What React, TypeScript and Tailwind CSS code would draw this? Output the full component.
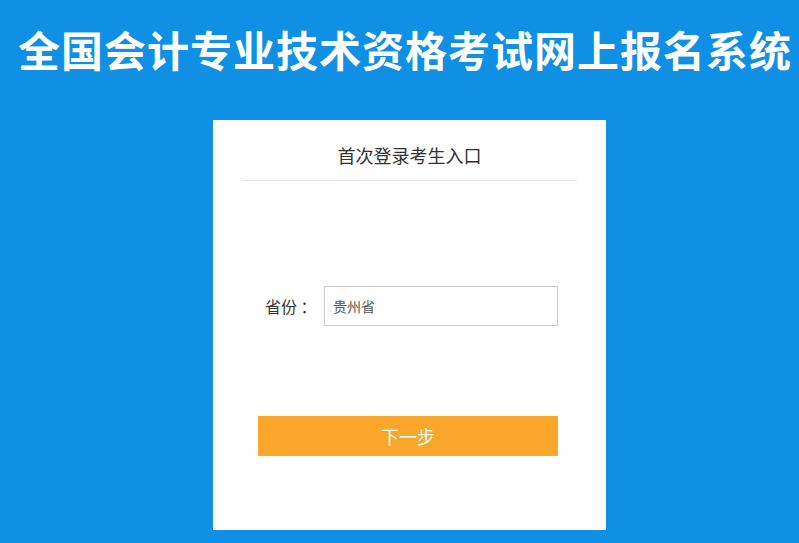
export default function App() {
  return (
    <div
      className="w-[799px] h-[543px] overflow-hidden bg-[#1090e4]"
      style={{ fontFamily: '"Noto Sans CJK SC", "Noto Sans", sans-serif' }}
    >
      <div className="pt-[24px] h-[74px] pl-[18px]">
        <h1 className="text-[42px] leading-[50px] font-bold text-white whitespace-nowrap tracking-[1px]">
          全国会计专业技术资格考试网上报名系统
        </h1>
      </div>
      <div className="mt-[46px] ml-[213px] w-[393px] h-[410px] bg-white">
        <div className="mx-[29px] h-[61px] border-b border-[#e5e5e5] pt-[23px] text-center">
          <div className="text-[18px] leading-[24px] text-[#333]">首次登录考生入口</div>
        </div>
        <div className="pl-[45px]">
          <div className="mt-[105px] flex items-center h-[40px]">
            <span className="ml-[7px] w-[59px] text-[16px] text-[#333]">省份 ：</span>
            <div className="w-[234px] h-[40px] border border-[#cccccc] flex items-center pl-[8px] text-[14px] text-[#555]">
              贵州省
            </div>
          </div>
          <button className="mt-[90px] w-[300px] h-[40px] bg-[#f9a62a] text-white text-[18px] flex items-center justify-center">
            下一步
          </button>
        </div>
      </div>
    </div>
  );
}
